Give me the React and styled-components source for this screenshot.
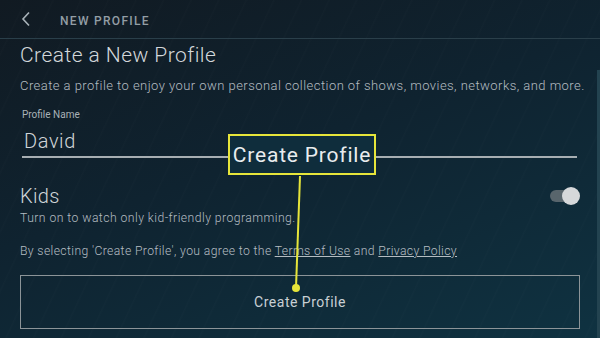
import React, { useState } from "react";
import styled, { createGlobalStyle } from "styled-components";

const GlobalStyle = createGlobalStyle`
  html, body {
    margin: 0;
    padding: 0;
    width: 600px;
    height: 338px;
    overflow: hidden;
  }
  body {
    font-family: "Roboto", "Liberation Sans", sans-serif;
  }
`;

const NewProfile = () => {
  const [kids, setKids] = useState(true);

  return (
    <Screen>
      <GlobalStyle />
      <Header>
        <BackButton aria-label="Back">
          <svg width="10" height="16" viewBox="0 0 10 16">
            <path d="M8 1.5 L2 8 L8 14.5" fill="none" stroke="#a9b3b9" strokeWidth="1.6" />
          </svg>
        </BackButton>
        <HeaderTitle>NEW PROFILE</HeaderTitle>
      </Header>

      <Content>
        <Title>Create a New Profile</Title>
        <Description>
          Create a profile to enjoy your own personal collection of shows, movies, networks, and more.
        </Description>

        <Field>
          <FieldLabel>Profile Name</FieldLabel>
          <FieldInput defaultValue="David" />
        </Field>

        <KidsRow>
          <div>
            <KidsTitle>Kids</KidsTitle>
            <Hint>Turn on to watch only kid-friendly programming.</Hint>
          </div>
          <Toggle $on={kids} onClick={() => setKids(!kids)} aria-label="Kids" />
        </KidsRow>

        <Agreement>
          By selecting 'Create Profile', you agree to the <TextLink>Terms of Use</TextLink> and{" "}
          <TextLink>Privacy Policy</TextLink>
        </Agreement>

        <CreateButton>Create Profile</CreateButton>
      </Content>

      <EdgeStrip />

      <Pointer width="600" height="338" viewBox="0 0 600 338">
        <line x1="300" y1="176" x2="296" y2="288" stroke="#e6e53a" strokeWidth="2" />
        <circle cx="296" cy="288" r="4" fill="#e6e53a" />
      </Pointer>
      <Callout>Create Profile</Callout>
    </Screen>
  );
};

export default NewProfile;

// Styled Components
const Screen = styled.div`
  position: relative;
  width: 600px;
  height: 338px;
  overflow: hidden;
  background:
    repeating-linear-gradient(
      115deg,
      rgba(255, 255, 255, 0) 0px,
      rgba(255, 255, 255, 0) 22px,
      rgba(255, 255, 255, 0.012) 23px,
      rgba(255, 255, 255, 0) 25px
    ),
    linear-gradient(160deg, #111a22 0%, #0f2330 45%, #0f3241 100%);
  color: #c9d0d4;
`;

const Header = styled.header`
  height: 39px;
  display: flex;
  align-items: center;
  padding: 0 0 0 21px;
  border-bottom: 1px solid #2a3f4a;
  box-sizing: border-box;
`;

const BackButton = styled.button`
  background: none;
  border: none;
  padding: 0;
  width: 10px;
  height: 16px;
  display: flex;
  cursor: pointer;
`;

const HeaderTitle = styled.h1`
  margin: 3px 0 0 29px;
  font-size: 12px;
  font-weight: 500;
  letter-spacing: 1.3px;
  color: #939ea5;
`;

const Content = styled.main`
  padding: 2px 20px 0 20px;
  display: flex;
  flex-direction: column;
`;

const Title = styled.h2`
  margin: 0;
  font-size: 21px;
  font-weight: 300;
  letter-spacing: 0.45px;
  color: #d3d8db;
  line-height: 28px;
`;

const Description = styled.p`
  margin: 9px 0 0;
  font-size: 13px;
  font-weight: 300;
  letter-spacing: 0.45px;
  color: #b5bdc2;
  line-height: 16px;
  white-space: nowrap;
`;

const Field = styled.div`
  margin: 15px 0 0 2px;
  width: 555px;
  display: flex;
  flex-direction: column;
`;

const FieldLabel = styled.label`
  font-size: 10px;
  color: #a9b2b7;
  line-height: 12px;
`;

const FieldInput = styled.input`
  margin-top: 7px;
  background: none;
  border: none;
  border-bottom: 2px solid #a7aeb2;
  padding: 0 0 2px 2px;
  font-family: inherit;
  font-size: 20px;
  font-weight: 300;
  letter-spacing: 0.6px;
  color: #d0d5d8;
  line-height: 26px;
  outline: none;
`;

const KidsRow = styled.div`
  margin-top: 26px;
  width: 558px;
  display: flex;
  justify-content: space-between;
  align-items: flex-start;
`;

const KidsTitle = styled.div`
  font-size: 20px;
  font-weight: 300;
  letter-spacing: 0.3px;
  color: #d0d5d8;
  line-height: 24px;
`;

const Hint = styled.div`
  margin-top: 3px;
  font-size: 12.2px;
  font-weight: 300;
  letter-spacing: 0.45px;
  color: #b5bdc2;
  line-height: 14px;
`;

const Toggle = styled.button`
  position: relative;
  margin-top: 6px;
  width: 28px;
  height: 12px;
  border: none;
  border-radius: 6px;
  background: #58656c;
  padding: 0;
  cursor: pointer;

  &::after {
    content: "";
    position: absolute;
    top: -3px;
    left: ${(p) => (p.$on ? "12px" : "-2px")};
    width: 18px;
    height: 18px;
    border-radius: 50%;
    background: #d6d8da;
  }
`;

const Agreement = styled.p`
  margin: 18px 0 0;
  font-size: 12.2px;
  font-weight: 300;
  letter-spacing: 0.37px;
  color: #b5bdc2;
  line-height: 16px;
`;

const TextLink = styled.a`
  color: #b5bdc2;
  text-decoration: underline;
  cursor: pointer;
`;

const CreateButton = styled.button`
  margin-top: 16px;
  width: 560px;
  height: 54px;
  background: transparent;
  border: 1.5px solid #8c9498;
  color: #c9d0d4;
  font-family: inherit;
  font-size: 14px;
  letter-spacing: 0.5px;
  cursor: pointer;
`;

const EdgeStrip = styled.div`
  position: absolute;
  top: 70px;
  right: 0;
  width: 3px;
  bottom: 0;
  background: #234350;
`;

const Pointer = styled.svg`
  position: absolute;
  top: 0;
  left: 0;
  pointer-events: none;
`;

const Callout = styled.div`
  position: absolute;
  top: 134px;
  left: 228px;
  width: 148px;
  height: 41px;
  box-sizing: border-box;
  border: 2px solid #e6e53a;
  background: #0f2d3c;
  color: #e9ecee;
  font-size: 21px;
  font-weight: 400;
  letter-spacing: 0.8px;
  display: flex;
  align-items: center;
  justify-content: center;
  white-space: nowrap;
`;
